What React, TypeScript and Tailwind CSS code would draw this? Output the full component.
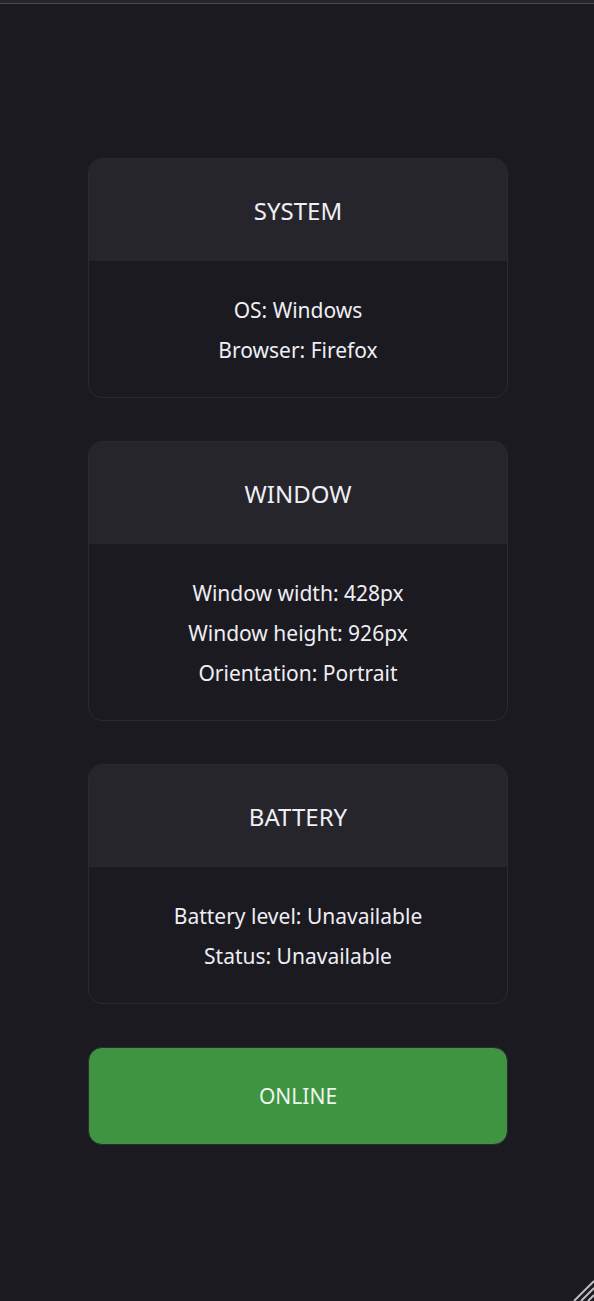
import React from "react";

function Card({ title, lines }: { title: string; lines: string[] }) {
  return (
    <div className="w-[420px] rounded-[14px] border border-[#2b2a31] overflow-hidden bg-[#1b1a21]">
      <div className="bg-[#27252c] h-[102px] flex items-center justify-center text-[24px] text-[#eeeef4] pt-[2px]">
        {title}
      </div>
      <div className="pt-[29px] pb-[27px] flex flex-col items-center text-[21px] text-[#eeeef4]">
        {lines.map((l) => (
          <div key={l} className="leading-[40px]">
            {l}
          </div>
        ))}
      </div>
    </div>
  );
}

export default function App() {
  return (
    <div
      className="relative w-[594px] h-[1301px] bg-[#1b1a21] overflow-hidden"
      style={{ fontFamily: '"Noto Sans", "Open Sans", sans-serif' }}
    >
      <div className="h-[3px] bg-[#252429]" />
      <div className="h-px bg-[#4a4a4e]" />
      <div className="flex flex-col items-center gap-[43px] pt-[154px] pl-[2px]">
        <Card title="SYSTEM" lines={["OS: Windows", "Browser: Firefox"]} />
        <Card
          title="WINDOW"
          lines={["Window width: 428px", "Window height: 926px", "Orientation: Portrait"]}
        />
        <Card title="BATTERY" lines={["Battery level: Unavailable", "Status: Unavailable"]} />
        <div className="w-[420px] h-[98px] rounded-[14px] border border-[#2b2a31] bg-[#3e9440] flex items-center justify-center text-[21px] text-[#eef4ee] pt-[2px]">
          ONLINE
        </div>
      </div>
      <svg
        className="absolute right-0 bottom-0"
        width="24"
        height="24"
        viewBox="0 0 24 24"
      >
        <g stroke="#bdbdbd" strokeWidth="2">
          <line x1="24" y1="4" x2="4" y2="24" />
          <line x1="24" y1="11" x2="11" y2="24" />
          <line x1="24" y1="18" x2="18" y2="24" />
        </g>
      </svg>
    </div>
  );
}
